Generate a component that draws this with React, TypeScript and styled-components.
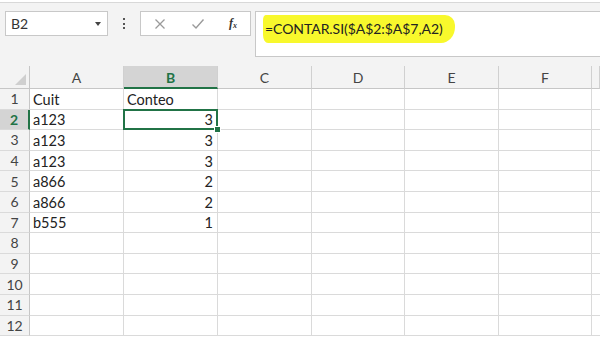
import React from 'react'
import styled, { createGlobalStyle } from 'styled-components'

const GlobalStyle = createGlobalStyle`
  html, body {
    margin: 0;
    padding: 0;
    background: #ffffff;
  }
  body {
    font-family: 'Lato', 'Open Sans', sans-serif;
    color: #222;
  }
`

const COLUMNS = ['A', 'B', 'C', 'D', 'E', 'F']
const ROWS = 12
const SELECTED_COL = 'B'
const SELECTED_ROW = 2

const data: Record<number, { a: string; b?: number; header?: string }> = {
  1: { a: 'Cuit', header: 'Conteo' },
  2: { a: 'a123', b: 3 },
  3: { a: 'a123', b: 3 },
  4: { a: 'a123', b: 3 },
  5: { a: 'a866', b: 2 },
  6: { a: 'a866', b: 2 },
  7: { a: 'b555', b: 1 },
}

const Page = styled.div`
  width: 600px;
  height: 341px;
  overflow: hidden;
  background: #fff;
`

const Toolbar = styled.div`
  height: 64px;
  box-sizing: border-box;
  background: #f3f3f3;
  border-top: 1px solid #d8d8d8;
  margin-top: 2px;
  padding: 8px 0 0 5px;
  display: flex;
  align-items: flex-start;
`

const NameBox = styled.div`
  width: 103px;
  height: 25px;
  box-sizing: border-box;
  background: #fff;
  border: 1px solid #c8c8c8;
  display: flex;
  align-items: center;
  justify-content: space-between;
  padding: 0 6px 0 5px;
  font-size: 14px;
  color: #333;
`

const Caret = styled.span`
  width: 0;
  height: 0;
  border-left: 3.5px solid transparent;
  border-right: 3.5px solid transparent;
  border-top: 4px solid #444;
`

const Dots = styled.div`
  width: 32px;
  height: 25px;
  display: flex;
  flex-direction: column;
  align-items: center;
  justify-content: center;
  gap: 2.5px;

  span {
    width: 2px;
    height: 2px;
    background: #555;
  }
`

const FuncBox = styled.div`
  width: 111px;
  height: 25px;
  box-sizing: border-box;
  background: #fff;
  border: 1px solid #c8c8c8;
  display: grid;
  grid-template-columns: 38px 37px 1fr;
  align-items: center;
  justify-items: center;
`

const Fx = styled.span`
  font-family: 'Liberation Serif', serif;
  font-style: italic;
  font-weight: bold;
  font-size: 12px;
  color: #333;

  sub {
    font-size: 8px;
    vertical-align: -1px;
  }
`

const FormulaBox = styled.div`
  flex: 1;
  margin-left: 4px;
  height: 46px;
  box-sizing: border-box;
  background: #fff;
  border: 1px solid #c8c8c8;
  border-right: none;
  padding: 3px 0 0 7px;
`

const Highlight = styled.span`
  display: inline-block;
  background: #f8f82c;
  padding: 5px 12px 6px 2px;
  border-radius: 3px 10px 14px 5px / 5px 10px 16px 8px;
  font-size: 14px;
  color: #222;
  letter-spacing: -0.05px;
`

const Grid = styled.div`
  display: grid;
  grid-template-columns: 30px 94px 94px 94px 93px 94px 93px 1fr;
  grid-template-rows: 23px repeat(${ROWS}, 20.6px) 1fr;
  height: 277px;
`

const Corner = styled.div`
  position: relative;
  background: #f3f3f3;
  border-right: 1px solid #c6c6c6;
  border-bottom: 1px solid #c6c6c6;

  &::after {
    content: '';
    position: absolute;
    right: 3px;
    bottom: 3px;
    width: 0;
    height: 0;
    border-left: 11px solid transparent;
    border-bottom: 11px solid #cfcfcf;
  }
`

const ColHeader = styled.div<{ $active?: boolean }>`
  background: ${p => (p.$active ? '#d4d4d4' : '#f3f3f3')};
  color: ${p => (p.$active ? '#217346' : '#444')};
  font-weight: ${p => (p.$active ? 'bold' : 'normal')};
  border-right: 1px solid #d0d0d0;
  border-bottom: ${p => (p.$active ? '2px solid #217346' : '1px solid #c6c6c6')};
  font-size: 14px;
  display: flex;
  align-items: center;
  justify-content: center;
  padding-top: 1px;
  box-sizing: border-box;
`

const RowHeader = styled.div<{ $active?: boolean }>`
  background: ${p => (p.$active ? '#d4d4d4' : '#f3f3f3')};
  color: ${p => (p.$active ? '#217346' : '#444')};
  font-weight: ${p => (p.$active ? 'bold' : 'normal')};
  border-right: ${p => (p.$active ? '2px solid #217346' : '1px solid #c6c6c6')};
  border-bottom: 1px solid #dadada;
  font-size: 14px;
  display: flex;
  align-items: center;
  justify-content: center;
  box-sizing: border-box;
`

const Cell = styled.div<{ $align?: 'left' | 'right'; $selected?: boolean }>`
  position: relative;
  border-right: 1px solid #dadada;
  border-bottom: 1px solid #dadada;
  font-size: 14.5px;
  color: #222;
  display: flex;
  align-items: center;
  justify-content: ${p => (p.$align === 'right' ? 'flex-end' : 'flex-start')};
  padding: 1px 4px 0 3px;
  box-sizing: border-box;
  white-space: nowrap;

  ${p =>
    p.$selected &&
    `
    &::before {
      content: '';
      position: absolute;
      left: -1px;
      top: -1px;
      right: -1px;
      bottom: -1px;
      border: 2px solid #217346;
    }
    &::after {
      content: '';
      position: absolute;
      right: -4px;
      bottom: -4px;
      width: 5px;
      height: 5px;
      background: #217346;
      border: 1px solid #fff;
      z-index: 1;
    }
  `}
`

const Filler = styled.div`
  border-bottom: 1px solid #dadada;
`

const Cross = () => (
  <svg width='12' height='12' viewBox='0 0 12 12'>
    <path d='M1.5 1.5 L10.5 10.5 M10.5 1.5 L1.5 10.5' stroke='#9a9a9a' strokeWidth='1.3' fill='none' />
  </svg>
)

const Check = () => (
  <svg width='14' height='12' viewBox='0 0 14 12'>
    <path d='M1.5 6.5 L5 10 L12.5 1.5' stroke='#9a9a9a' strokeWidth='1.4' fill='none' />
  </svg>
)

const cellValue = (row: number, col: string) => {
  const r = data[row]
  if (!r) return { text: '', align: 'left' as const }
  if (col === 'A') return { text: r.a, align: 'left' as const }
  if (col === 'B') {
    if (r.header) return { text: r.header, align: 'left' as const }
    if (r.b !== undefined) return { text: String(r.b), align: 'right' as const }
  }
  return { text: '', align: 'left' as const }
}

export default function App() {
  const rows = Array.from({ length: ROWS }, (_, i) => i + 1)
  return (
    <Page>
      <GlobalStyle />
      <Toolbar>
        <NameBox>
          <span>B2</span>
          <Caret />
        </NameBox>
        <Dots>
          <span />
          <span />
          <span />
        </Dots>
        <FuncBox>
          <Cross />
          <Check />
          <Fx>
            f<sub>x</sub>
          </Fx>
        </FuncBox>
        <FormulaBox>
          <Highlight>=CONTAR.SI($A$2:$A$7,A2)</Highlight>
        </FormulaBox>
      </Toolbar>
      <Grid>
        <Corner />
        {COLUMNS.map(c => (
          <ColHeader key={c} $active={c === SELECTED_COL}>
            {c}
          </ColHeader>
        ))}
        <ColHeader />
        {rows.map(r => (
          <React.Fragment key={r}>
            <RowHeader $active={r === SELECTED_ROW}>{r}</RowHeader>
            {COLUMNS.map(c => {
              const v = cellValue(r, c)
              return (
                <Cell key={c} $align={v.align} $selected={r === SELECTED_ROW && c === SELECTED_COL}>
                  {v.text}
                </Cell>
              )
            })}
            <Filler />
          </React.Fragment>
        ))}
      </Grid>
    </Page>
  )
}
